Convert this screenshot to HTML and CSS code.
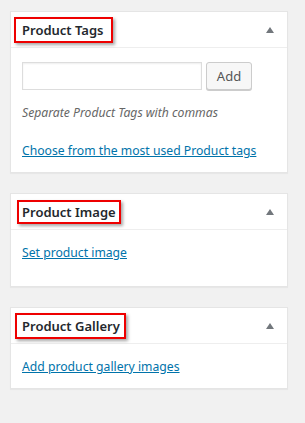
FILE: index.html
```html
<!DOCTYPE html>
<html lang="en">
<head>
  <meta charset="UTF-8">
  <title>Product sidebar</title>
  <link rel="stylesheet" href="styles.css">
</head>
<body>
  <main class="sidebar">
    <div class="postbox">
      <h2 class="hndle">
        <span class="mark mark_tags">Product Tags</span>
        <span class="toggle"></span>
      </h2>
      <div class="inside">
        <div class="tag_add">
          <input type="text" class="tag_input">
          <button type="button" class="button">Add</button>
        </div>
        <p class="howto">Separate Product Tags with commas</p>
        <p class="tag_cloud"><a href="#">Choose from the most used Product tags</a></p>
      </div>
    </div>

    <div class="postbox">
      <h2 class="hndle">
        <span class="mark mark_image">Product Image</span>
        <span class="toggle"></span>
      </h2>
      <div class="inside inside_image">
        <p><a href="#">Set product image</a></p>
      </div>
    </div>

    <div class="postbox">
      <h2 class="hndle">
        <span class="mark mark_gallery">Product Gallery</span>
        <span class="toggle"></span>
      </h2>
      <div class="inside">
        <p><a href="#">Add product gallery images</a></p>
      </div>
    </div>
  </main>
</body>
</html>
```

FILE: styles.css
```css
*{
  box-sizing: border-box;
  margin: 0;
  padding: 0;
}
body{
  background-color: #f1f1f1;
  font-family: "Noto Sans", "Open Sans", sans-serif;
  font-size: 12.2px;
  color: #444;
}
.sidebar{
  width: 278px;
  margin: 11px 0 0 10px;
}
.postbox{
  background-color: #fff;
  border: 1px solid #e5e5e5;
  box-shadow: 0 1px 1px rgba(0, 0, 0, 0.04);
  margin-bottom: 20px;
}
.hndle{
  display: flex;
  align-items: center;
  height: 36px;
  border-bottom: 1px solid #eee;
  font-size: 13px;
  font-weight: 600;
  color: #23282d;
}
.mark{
  border: 2px solid #ee0000;
  box-shadow: 2px 2px 3px rgba(0, 0, 0, 0.35);
  line-height: 20px;
}
.mark_tags{
  margin-left: 3px;
  padding: 1px 7px 1px 6px;
}
.mark_image{
  margin-left: 6px;
  padding: 0 3px 0 3px;
}
.mark_gallery{
  margin-left: 4px;
  padding: 1px 4px 1px 5px;
}
.toggle{
  margin-left: auto;
  margin-right: 13px;
  width: 0;
  height: 0;
  border-left: 4px solid transparent;
  border-right: 4px solid transparent;
  border-bottom: 6px solid #72777c;
}
.inside{
  padding: 14px 12px 12px 11px;
  line-height: 18px;
}
.inside_image{
  padding-bottom: 24px;
}
.tag_add{
  display: flex;
  gap: 4px;
}
.tag_input{
  width: 180px;
  height: 28px;
  border: 1px solid #ddd;
  box-shadow: inset 0 1px 2px rgba(0, 0, 0, 0.07);
}
.button{
  width: 46px;
  height: 28px;
  background-color: #f7f7f7;
  border: 1px solid #ccc;
  border-radius: 3px;
  box-shadow: 0 1px 0 #ccc;
  color: #555;
  font-family: inherit;
  font-size: 13px;
}
.howto{
  margin-top: 14px;
  font-style: italic;
  color: #666;
}
.tag_cloud{
  margin-top: 20px;
}
a{
  color: #0073aa;
}
```
